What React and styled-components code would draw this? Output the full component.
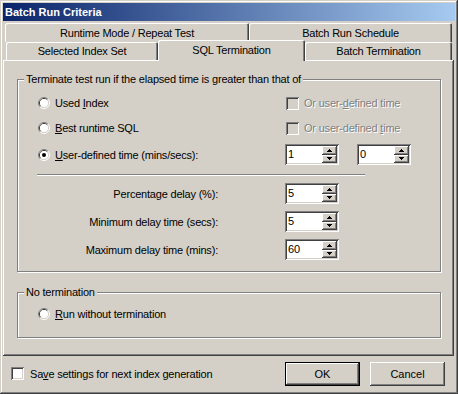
import React from "react";
import styled, { createGlobalStyle, css } from "styled-components";

const face = "#D4D0C8";
const shadow = "#808080";
const dark = "#404040";

const GlobalStyle = createGlobalStyle`
  html, body {
    margin: 0;
    padding: 0;
    background: ${face};
  }
  body {
    font-family: "Liberation Sans", Arial, sans-serif;
    font-size: 11px;
    letter-spacing: -0.2px;
    color: #000;
  }
  * {
    box-sizing: border-box;
  }
`;

const raised = css`
  box-shadow: inset -1px -1px ${dark}, inset 1px 1px #fff,
    inset -2px -2px ${shadow}, inset 2px 2px ${face};
`;

const sunken = css`
  box-shadow: inset 1px 1px ${shadow}, inset -1px -1px #fff,
    inset 2px 2px ${dark}, inset -2px -2px ${face};
`;

const Window = styled.div`
  width: 458px;
  height: 394px;
  padding: 3px;
  background: ${face};
  display: flex;
  flex-direction: column;
  box-shadow: inset -1px -1px ${dark}, inset 1px 1px ${face},
    inset -2px -2px ${shadow}, inset 2px 2px #fff;
`;

const TitleBar = styled.div`
  height: 18px;
  padding-left: 2px;
  line-height: 18px;
  font-weight: bold;
  letter-spacing: 0;
  color: #fff;
  background: linear-gradient(to right, #0a246a, #a6caf0);
`;

const Tabs = styled.div`
  margin-top: 2px;
  display: flex;
  flex-direction: column;
`;

const TabRow = styled.div`
  display: flex;
  align-items: flex-start;
  height: ${(p) => p.$h}px;
  padding-left: ${(p) => p.$indent}px;
`;

const Tab = styled.div`
  width: ${(p) => p.$w}px;
  height: ${(p) => (p.$active ? 21 : p.$h)}px;
  margin-top: ${(p) => (p.$active ? -2 : 0)}px;
  padding-bottom: ${(p) => (p.$active ? 2 : 0)}px;
  position: relative;
  z-index: ${(p) => (p.$active ? 1 : 0)};
  display: flex;
  align-items: center;
  justify-content: center;
  background: ${face};
  border-top-left-radius: 2px;
  border-top-right-radius: 2px;
  box-shadow: inset 1px 1px #fff, inset -1px 0 ${dark}, inset -2px 0 ${shadow};
`;

const Panel = styled.div`
  width: 451px;
  height: 296px;
  padding: 12px 0 0 14px;
  box-shadow: inset -1px -1px ${dark}, inset 1px 1px #fff, inset -2px -2px ${shadow};
`;

const Group = styled.fieldset`
  margin: ${(p) => p.$mt || 0}px 0 0 0;
  padding: 0;
  width: 424px;
  border: 1px solid ${shadow};
  box-shadow: 1px 1px 0 #fff, inset 1px 1px 0 #fff;
`;

const Legend = styled.legend`
  margin-left: 6px;
  padding: 0 2px;
  line-height: 15px;
  background: ${face};
`;

const GroupBody = styled.div`
  padding: ${(p) => p.$pad};
  display: flex;
  flex-direction: column;
`;

const Row = styled.div`
  display: grid;
  grid-template-columns: 248px 72px 1fr;
  align-items: center;
  height: ${(p) => p.$h || 20}px;
  margin-top: ${(p) => p.$mt || 0}px;
`;

const Option = styled.label`
  display: flex;
  align-items: center;
  gap: 5px;
  padding-left: 1px;
  white-space: nowrap;
  grid-column: ${(p) => (p.$wide ? "2 / span 2" : "auto")};
  color: ${(p) => (p.$disabled ? shadow : "#000")};
  text-shadow: ${(p) => (p.$disabled ? "1px 1px 0 #fff" : "none")};
`;

const CheckBox = styled.span`
  flex: none;
  width: 13px;
  height: 13px;
  background: ${(p) => (p.$disabled ? face : "#fff")};
  ${sunken};
`;

const FieldLabel = styled.span`
  text-align: right;
  padding-right: 67px;
  white-space: nowrap;
`;

const Separator = styled.div`
  width: 328px;
  height: 2px;
  margin-top: ${(p) => p.$mt}px;
  border-top: 1px solid ${shadow};
  border-bottom: 1px solid #fff;
`;

const SpinBox = styled.div`
  width: 54px;
  height: 21px;
  padding: 2px;
  display: flex;
  background: #fff;
  ${sunken};
`;

const SpinValue = styled.span`
  flex: 1;
  padding-left: 1px;
  line-height: 17px;
`;

const SpinButtons = styled.div`
  width: 15px;
  display: flex;
  flex-direction: column;
`;

const SpinButton = styled.div`
  flex: 1;
  display: flex;
  align-items: center;
  justify-content: center;
  background: ${face};
  ${raised};
`;

const Footer = styled.div`
  flex: 1;
  display: flex;
  align-items: center;
  padding: 0 10px 0 8px;
`;

const SaveOption = styled.label`
  display: flex;
  align-items: center;
  gap: 6px;
  flex: 1;
`;

const Button = styled.button`
  width: 75px;
  height: 24px;
  margin-left: ${(p) => (p.$default ? 0 : 10)}px;
  padding: 0;
  font: inherit;
  color: #000;
  background: ${face};
  border: ${(p) => (p.$default ? "1px solid #000" : "none")};
  ${raised};
`;

const Arrow = ({ down }) => (
  <svg width="5" height="3" viewBox="0 0 5 3" shapeRendering="crispEdges">
    <rect x={down ? 0 : 2} y="0" width={down ? 5 : 1} height="1" fill="#000" />
    <rect x="1" y="1" width="3" height="1" fill="#000" />
    <rect x={down ? 2 : 0} y="2" width={down ? 1 : 5} height="1" fill="#000" />
  </svg>
);

const Spin = ({ value }) => (
  <SpinBox>
    <SpinValue>{value}</SpinValue>
    <SpinButtons>
      <SpinButton>
        <Arrow />
      </SpinButton>
      <SpinButton>
        <Arrow down />
      </SpinButton>
    </SpinButtons>
  </SpinBox>
);

const Radio = ({ checked }) => (
  <svg width="12" height="12" viewBox="0 0 12 12">
    <path d="M2.11 9.89 A5.5 5.5 0 0 1 9.89 2.11" stroke={shadow} fill="none" />
    <path d="M9.89 2.11 A5.5 5.5 0 0 1 2.11 9.89" stroke="#fff" fill="none" />
    <path d="M2.82 9.18 A4.5 4.5 0 0 1 9.18 2.82" stroke={dark} fill="none" />
    <path d="M9.18 2.82 A4.5 4.5 0 0 1 2.82 9.18" stroke={face} fill="none" />
    <circle cx="6" cy="6" r="4" fill="#fff" />
    {checked && <circle cx="6" cy="6" r="2" fill="#000" />}
  </svg>
);

const App = () => {
  return (
    <Window>
      <GlobalStyle />
      <TitleBar>Batch Run Criteria</TitleBar>
      <Tabs>
        <TabRow $h={19} $indent={2}>
          <Tab $w={244} $h={19}>Runtime Mode / Repeat Test</Tab>
          <Tab $w={203} $h={19}>Batch Run Schedule</Tab>
        </TabRow>
        <TabRow $h={18} $indent={3}>
          <Tab $w={152} $h={18}>Selected Index Set</Tab>
          <Tab $w={147} $active>SQL Termination</Tab>
          <Tab $w={147} $h={18}>Batch Termination</Tab>
        </TabRow>
      </Tabs>
      <Panel>
        <Group>
          <Legend>Terminate test run if the elapsed time is greater than that of</Legend>
          <GroupBody $pad="6px 0 11px 19px">
            <Row>
              <Option>
                <Radio />
                <span>Used <u>I</u>ndex</span>
              </Option>
              <Option $disabled $wide>
                <CheckBox $disabled />
                <span>Or user-<u>d</u>efined time</span>
              </Option>
            </Row>
            <Row $mt={5}>
              <Option>
                <Radio />
                <span><u>B</u>est runtime SQL</span>
              </Option>
              <Option $disabled $wide>
                <CheckBox $disabled />
                <span>Or user-defined <u>t</u>ime</span>
              </Option>
            </Row>
            <Row $mt={6} $h={21}>
              <Option>
                <Radio checked />
                <span><u>U</u>ser-defined time (mins/secs):</span>
              </Option>
              <Spin value="1" />
              <Spin value="0" />
            </Row>
            <Separator $mt={9} />
            <Row $mt={7} $h={21}>
              <FieldLabel>Percentage delay (%):</FieldLabel>
              <Spin value="5" />
            </Row>
            <Row $mt={7} $h={21}>
              <FieldLabel>Minimum delay time (secs):</FieldLabel>
              <Spin value="5" />
            </Row>
            <Row $mt={7} $h={21}>
              <FieldLabel>Maximum delay time (mins):</FieldLabel>
              <Spin value="60" />
            </Row>
          </GroupBody>
        </Group>
        <Group $mt={13}>
          <Legend>No termination</Legend>
          <GroupBody $pad="4px 0 13px 19px">
            <Row>
              <Option>
                <Radio />
                <span><u>R</u>un without termination</span>
              </Option>
            </Row>
          </GroupBody>
        </Group>
      </Panel>
      <Footer>
        <SaveOption>
          <CheckBox />
          <span>Sa<u>v</u>e settings for next index generation</span>
        </SaveOption>
        <Button $default>OK</Button>
        <Button>Cancel</Button>
      </Footer>
    </Window>
  );
};

export default App;
